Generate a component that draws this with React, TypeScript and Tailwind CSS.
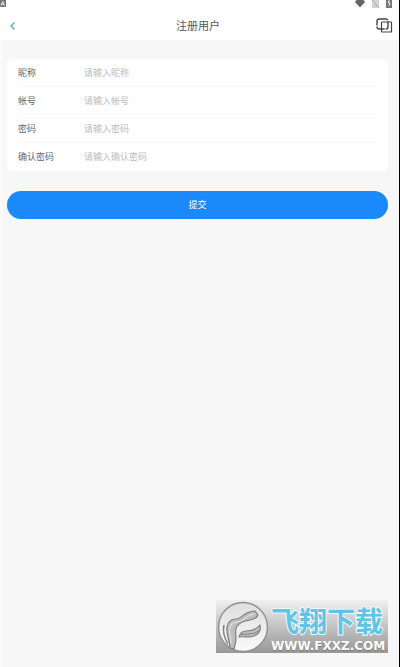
const fields = [
  { id: "nickname", label: "昵称", placeholder: "请输入昵称", type: "text" },
  { id: "account", label: "帐号", placeholder: "请输入帐号", type: "text" },
  { id: "password", label: "密码", placeholder: "请输入密码", type: "password" },
  { id: "confirm", label: "确认密码", placeholder: "请输入确认密码", type: "password" },
];

function StatusBar() {
  return (
    <div className="flex h-2 items-start justify-between pr-[7px]">
      <svg className="h-2 w-[6px]" viewBox="0 0 6 8">
        <path d="M0 0h6v7H0z" fill="#777" />
        <path d="M1 5.5 2.7 1.5 4.4 5.5M1.6 4.2h2.2" fill="none" stroke="#eee" />
      </svg>
      <div className="flex gap-[7px]">
        {/* Wifi */}
        <svg className="h-2 w-[10px]" viewBox="0 0 10 8">
          <path d="M0 2 1.5 0h7L10 2 5 7.5z" fill="#666" />
        </svg>
        {/* No sim */}
        <svg className="h-2 w-[7px]" viewBox="0 0 7 8">
          <path d="M0 0h7v8H0z" fill="#d4d4d4" />
          <path d="M0 0 7 8" stroke="#aaa" />
        </svg>
        {/* Battery */}
        <svg className="h-2 w-[6px]" viewBox="0 0 6 8">
          <path d="M0 0h6v8H0z" fill="#777" />
          <path d="M4 1H2.5v2H4L3 6" fill="none" stroke="#eee" />
        </svg>
      </div>
    </div>
  );
}

function Header() {
  return (
    <header className="h-10 bg-white">
      <StatusBar />
      <div className="grid h-9 grid-cols-3 items-center pl-2 pr-[6px]">
        <button type="button" aria-label="返回" className="w-fit">
          <svg className="h-[10px] w-2" viewBox="0 0 8 10" fill="none">
            <path d="M6.5 1.5 3 5l3.5 3.5" stroke="#5aaec4" strokeWidth="1.4" />
          </svg>
        </button>
        <h1 className="pr-[5px] text-center text-[11px] leading-4 text-[#555]">注册用户</h1>
        <button type="button" aria-label="切换" className="w-fit justify-self-end">
          <svg className="h-4 w-[17px]" viewBox="0 0 17 16" fill="none" stroke="#444" strokeWidth="1.2">
            <rect x="1" y="1" width="11" height="10" rx="2" strokeDasharray="9 1" strokeWidth="1.4" />
            <rect x="5.5" y="4" width="10" height="10" rx="0.5" />
          </svg>
        </button>
      </div>
    </header>
  );
}

function Watermark() {
  return (
    <div className="flex h-[53px] w-[172px] items-center gap-[2px] bg-gradient-to-b from-[#f0f0f0] to-[#989898] pl-[1px]">
      <svg className="h-[52px] w-[52px] shrink-0" viewBox="0 0 52 52">
        <defs>
          <linearGradient id="disc" x1="0" y1="0" x2="0" y2="1">
            <stop offset="0" stopColor="#dedede" />
            <stop offset="1" stopColor="#fafafa" />
          </linearGradient>
        </defs>
        <circle cx="26" cy="26" r="24.5" fill="url(#disc)" stroke="#929292" strokeWidth="1.5" />
        <g fill="#bdbdbd" stroke="#808080" strokeWidth="1.2" strokeLinejoin="round">
          <path d="M13 47C13 40 9 34 10 26c1-6 5-8 9-8 5 0 6-4 11-6 3-1 5-2 8-2l3 4c-1 3-4 4-8 5-4 1-8 1-11 4-5 4-3 9-3 14 0 4-1 8-2 11z" />
          <path d="M22 36c1-4 3-6 7-6 6 0 10-1 14-6 1 5-1 9-6 11-5 2-9 0-15 1z" />
        </g>
        <path d="M24 33.5c6-1 12 1 18-4" fill="none" stroke="#808080" />
        <path d="M7 24C5 32 8 38 11 43" fill="none" stroke="#808080" strokeWidth="1.5" />
        <path d="M14 43c0-7-3-14 0-19 4-4 9-2 13-6 4-3 6-4 10-5" fill="none" stroke="#e8e8e8" />
      </svg>
      <div className="flex flex-col pt-1">
        <span className="font-['Noto_Sans_CJK_SC',sans-serif] text-[28px] leading-8 font-bold text-[#62c4e4] [paint-order:stroke] [-webkit-text-stroke:2px_#effaff]">
          飞翔下载
        </span>
        <span className="pt-[2px] font-['DejaVu_Sans',sans-serif] text-[12px] leading-4 font-bold text-white [text-shadow:0_1px_1px_#777]">
          WWW.FXXZ.COM
        </span>
      </div>
    </div>
  );
}

export default function App() {
  return (
    <div className="flex min-h-screen flex-col border-r border-black bg-[#f7f7f7] font-['Liberation_Sans','Noto_Sans_CJK_SC',sans-serif]">
      <Header />
      <main className="flex grow flex-col border-l-2 border-[#fbfbfb] pl-[5px] pr-[11px]">
        <form onSubmit={(e) => e.preventDefault()}>
          <div className="mt-[19px] rounded-md bg-white px-[11px]">
            {fields.map((field) => (
              <div key={field.id} className="flex h-7 items-center border-b border-[#f8f8f8] last:border-b-0">
                <label htmlFor={field.id} className="w-[66px] text-[9px] leading-4 text-[#666]">
                  {field.label}
                </label>
                <input
                  id={field.id}
                  type={field.type}
                  placeholder={field.placeholder}
                  className="min-w-0 grow text-[9px] leading-4 text-[#666] outline-none placeholder:text-[#bbb]"
                />
              </div>
            ))}
          </div>
          <button type="submit" className="mt-5 h-7 w-full rounded-full bg-[#1b89f9] text-[9px] leading-4 text-white">
            提交
          </button>
        </form>
        <div className="mt-auto mb-[14px] self-end">
          <Watermark />
        </div>
      </main>
    </div>
  );
}
